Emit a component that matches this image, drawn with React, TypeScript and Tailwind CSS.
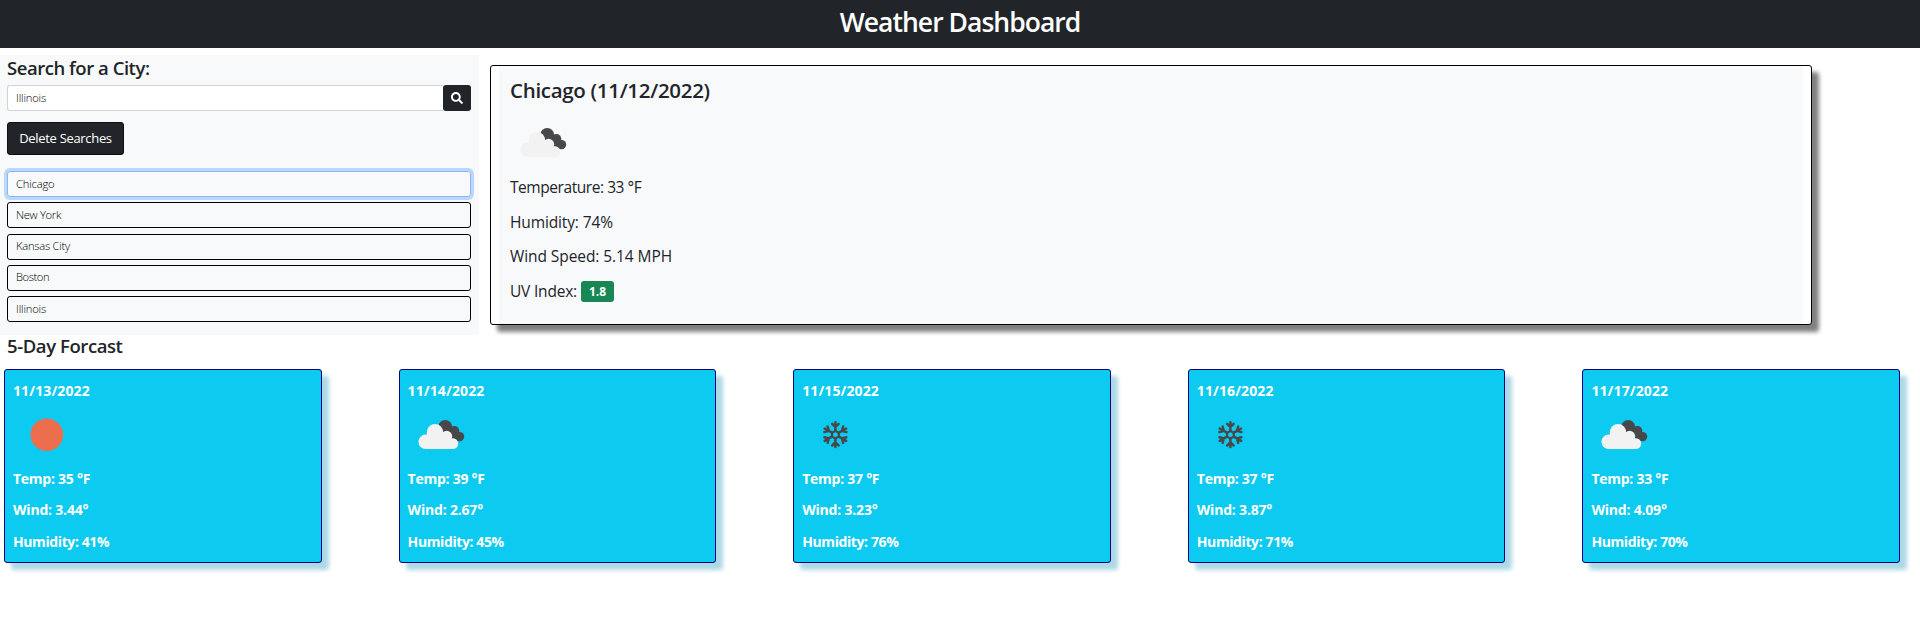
import { FaSearch } from "react-icons/fa";

type Sky = "sun" | "clouds" | "snow";

const history = [
  { name: "Chicago", tracking: "tracking-[-0.17px]" },
  { name: "New York", tracking: "tracking-[-0.3px]" },
  { name: "Kansas City", tracking: "tracking-[-0.24px]" },
  { name: "Boston", tracking: "tracking-[-0.44px]" },
  { name: "Illinois", tracking: "tracking-[-0.16px]" },
];

const forecast: { date: string; sky: Sky; temp: string; wind: string; humidity: string }[] = [
  { date: "11/13/2022", sky: "sun", temp: "35", wind: "3.44", humidity: "41" },
  { date: "11/14/2022", sky: "clouds", temp: "39", wind: "2.67", humidity: "45" },
  { date: "11/15/2022", sky: "snow", temp: "37", wind: "3.23", humidity: "76" },
  { date: "11/16/2022", sky: "snow", temp: "37", wind: "3.87", humidity: "71" },
  { date: "11/17/2022", sky: "clouds", temp: "33", wind: "4.09", humidity: "70" },
];

function SkyIcon({ sky }: { sky: Sky }) {
  return (
    <svg className="ml-[9px] block h-[50px] w-[50px] shrink-0" viewBox="0 0 50 50">
      {sky === "sun" && <circle cx="24.8" cy="24.8" r="16.3" fill="#ec6e4c" />}
      {sky === "clouds" && (
        <>
          <g fill="#48484a">
            <circle cx="28.2" cy="17" r="7" />
            <circle cx="37.4" cy="20.9" r="4.9" />
            <circle cx="42.5" cy="26.6" r="4.7" />
            <path d="M28 17L40 20L40 29L28 28Z" />
          </g>
          <g fill="#f2f2f2">
            <circle cx="8.6" cy="31.8" r="7.2" />
            <circle cx="18" cy="22.4" r="8.3" />
            <circle cx="29.6" cy="26.4" r="5.6" />
            <circle cx="35.8" cy="33.6" r="5.4" />
            <path d="M8.6 25L18 22L30 22L36 32V39H8.6Z" />
          </g>
        </>
      )}
      {sky === "snow" && (
        <g transform="translate(24.4 24.7)" fill="none" stroke="#48484a" strokeWidth="2.5" strokeLinecap="round">
          <path d="M0 -3.8L3.3 -1.9V1.9L0 3.8L-3.3 1.9V-1.9Z" strokeWidth="2.2" />
          {[0, 60, 120, 180, 240, 300].map((a) => (
            <path key={a} transform={`rotate(${a})`} d="M0 -4V-12.4M-3.2 -10.8L0 -7.6L3.2 -10.8" />
          ))}
        </g>
      )}
    </svg>
  );
}

export default function App() {
  return (
    <div className="h-[623px] overflow-hidden bg-white font-['Open_Sans','Noto_Sans',sans-serif] text-[#212529]">
      <header className="h-12 bg-[#212529] text-center">
        <h1 className="text-[26.5px] leading-[45px] font-semibold tracking-[-0.97px] text-white">Weather Dashboard</h1>
      </header>

      <div className="flex pt-[7px]">
        <aside className="h-[280px] w-[479px] bg-[#f8f9fb] pr-2 pl-[7px]">
          <h2 className="mb-1 text-[18.5px] leading-[26px] font-semibold tracking-[-0.46px]">Search for a City:</h2>
          <div className="flex h-[26px]">
            <input
              defaultValue="Illinois"
              className="min-w-0 flex-1 rounded-l-[3px] border border-r-0 border-[#ced4da] bg-white px-2 text-[11.2px] font-light tracking-[-0.16px] text-black"
            />
            <button className="flex w-7 items-center justify-center rounded-[3px] bg-[#212529] text-white">
              <FaSearch className="h-3 w-3" />
            </button>
          </div>
          <button className="mt-[11px] block h-[33px] w-[117px] rounded-[3px] border border-[#0c0e10] bg-[#212529] text-[13px] tracking-[-0.32px] text-white">
            Delete Searches
          </button>
          <ul className="mt-4 flex flex-col gap-[5.25px] text-black">
            {history.map((h, i) => (
              <li
                key={h.name}
                className={`flex h-[26px] items-center rounded-[3px] border px-2 text-[11.2px] font-light ${h.tracking} ${
                  i === 0 ? "border-[#86b7fe] shadow-[0_0_0_3px_rgba(13,110,253,0.25)]" : "border-black"
                }`}
              >
                {h.name}
              </li>
            ))}
          </ul>
        </aside>

        <section className="mt-[10px] ml-[11px] h-[260px] w-[1322px] rounded-[3px] border border-black bg-white px-2 shadow-[7px_7px_4px_gray]">
          <div className="h-full bg-[#f8f9fb] pl-[11px]">
            <h2 className="pt-2 pb-[11px] text-[20.5px] leading-[33px] font-semibold tracking-[-0.3px]">Chicago (11/12/2022)</h2>
            <SkyIcon sky="clouds" />
            <div className="mt-[2px] text-[15.5px] leading-[34.6px]">
              <p className="tracking-[-0.44px]">Temperature: 33 °F</p>
              <p className="tracking-[-0.13px]">Humidity: 74%</p>
              <p className="tracking-[-0.08px]">Wind Speed: 5.14 MPH</p>
              <p className="flex items-center">
                <span className="w-[71px] tracking-[-0.2px]">UV Index:</span>
                <span className="h-[21px] w-[33px] rounded-[3px] bg-[#198754] text-center text-xs leading-[22px] font-bold text-white">
                  1.8
                </span>
              </p>
            </div>
          </div>
        </section>
      </div>

      <h2 className="pl-[7px] text-[18.5px] leading-[22px] font-semibold tracking-[-0.42px]">5-Day Forcast</h2>

      <div className="mt-3 flex justify-between pr-5 pl-1">
        {forecast.map((d) => (
          <article
            key={d.date}
            className="h-[194px] w-[317.6px] rounded-[3px] border border-[#000080] bg-[#0dcaf0] pt-[9px] pl-2 text-sm font-bold text-white shadow-[7px_7px_4px_lightblue]"
          >
            <p className="mb-[7px] leading-6 tracking-[0.12px]">{d.date}</p>
            <SkyIcon sky={d.sky} />
            <div className="mt-[3px] leading-[31.4px]">
              <p className="tracking-[-0.26px]">Temp: {d.temp} °F</p>
              <p className="tracking-[-0.2px]">Wind: {d.wind}°</p>
              <p className="tracking-[-0.4px]">Humidity: {d.humidity}%</p>
            </div>
          </article>
        ))}
      </div>
    </div>
  );
}
